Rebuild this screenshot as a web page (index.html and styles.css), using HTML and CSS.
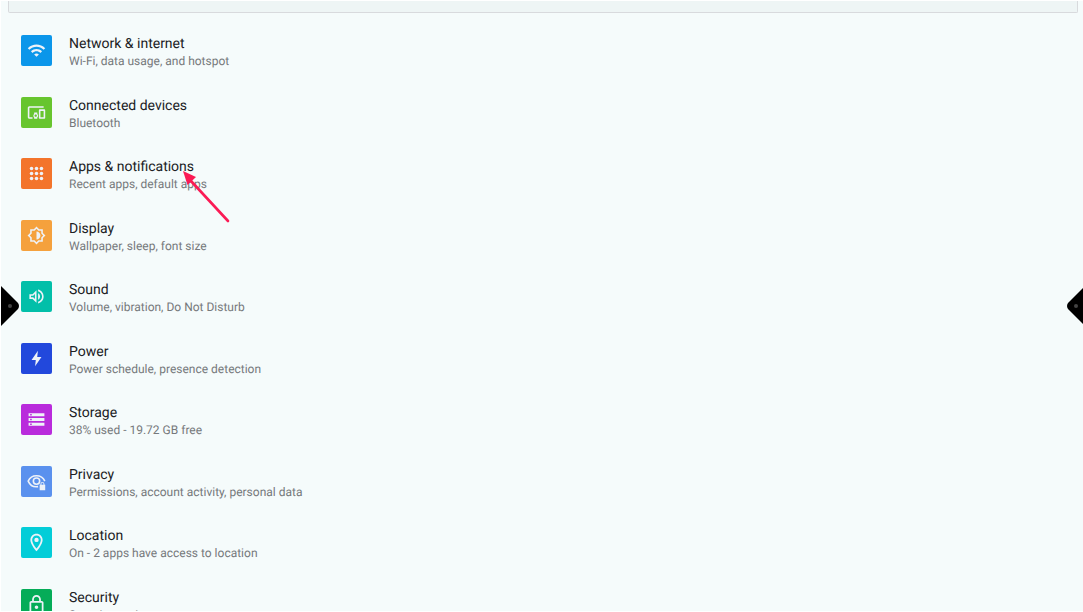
FILE: index.html
```html
<!DOCTYPE html>
<html lang="en">
  <head>
    <meta charset="UTF-8" />
    <meta name="viewport" content="width=device-width, initial-scale=1.0" />
    <title>Settings</title>
    <link rel="stylesheet" href="styles.css">
  </head>

  <body>
    <main class="screen">
      <div class="search-card"></div>

      <ul class="settings">
        <li class="item">
          <a href="#network">
            <span class="icon network">
              <svg viewBox="0 0 24 24"><path d="M1 9l2 2c4.970-4.970 13.030-4.970 18 0l2-2C16.930 2.930 7.080 2.930 1 9zm8 8l3 3 3-3c-1.650-1.660-4.340-1.660-6 0zm-4-4l2 2c2.760-2.760 7.240-2.760 10 0l2-2C15.140 9.140 8.870 9.140 5 13z" /></svg>
            </span>
            <span class="text">
              <span class="title">Network &amp; internet</span>
              <span class="summary">Wi-Fi, data usage, and hotspot</span>
            </span>
          </a>
        </li>
        <li class="item">
          <a href="#devices">
            <span class="icon devices">
              <svg viewBox="0 0 24 24"><path d="M3 6h18V4H3c-1.100 0-2 .9-2 2v12c0 1.100.9 2 2 2h4v-2H3V6zm10 6H9v1.780c-.61.550-1 1.330-1 2.220s.39 1.670 1 2.220V20h4v-1.780c.61-.55 1-1.340 1-2.220s-.39-1.670-1-2.220V12zm-2 5.500c-.83 0-1.500-.67-1.500-1.500s.67-1.500 1.500-1.500 1.500.67 1.500 1.500-.67 1.500-1.500 1.500zM22 8h-6c-.5 0-1 .5-1 1v10c0 .5.500 1 1 1h6c.5 0 1-.5 1-1V9c0-.5-.5-1-1-1zm-1 10h-4v-8h4v8z" /></svg>
            </span>
            <span class="text">
              <span class="title">Connected devices</span>
              <span class="summary">Bluetooth</span>
            </span>
          </a>
        </li>
        <li class="item">
          <a href="#apps">
            <span class="icon apps">
              <svg viewBox="0 0 24 24"><g><circle cx="5" cy="5" r="2.500" /><circle cx="12" cy="5" r="2.500" /><circle cx="19" cy="5" r="2.500" /><circle cx="5" cy="12" r="2.500" /><circle cx="12" cy="12" r="2.500" /><circle cx="19" cy="12" r="2.500" /><circle cx="5" cy="19" r="2.500" /><circle cx="12" cy="19" r="2.500" /><circle cx="19" cy="19" r="2.500" /></g></svg>
            </span>
            <span class="text">
              <span class="title">Apps &amp; notifications</span>
              <span class="summary">Recent apps, default apps</span>
            </span>
          </a>
          <svg class="arrow" viewBox="0 0 48 54">
            <path d="M45 50L8 10" stroke="#fb1b55" stroke-width="2.600" stroke-linecap="round" />
            <path d="M0 0L13 6L4.500 14Z" fill="#fb1b55" />
          </svg>
        </li>
        <li class="item">
          <a href="#display">
            <span class="icon display">
              <svg viewBox="0 0 24 24"><path d="M20 8.690V4h-4.690L12 .69 8.690 4H4v4.690L.69 12 4 15.310V20h4.690L12 23.310 15.310 20H20v-4.690L23.310 12 20 8.690zm-2 5.790V18h-3.520L12 20.480 9.520 18H6v-3.520L3.520 12 6 9.520V6h3.520L12 3.520 14.480 6H18v3.520L20.480 12 18 14.480zM12 7v10c2.760 0 5-2.240 5-5s-2.240-5-5-5z" /></svg>
            </span>
            <span class="text">
              <span class="title">Display</span>
              <span class="summary">Wallpaper, sleep, font size</span>
            </span>
          </a>
        </li>
        <li class="item">
          <a href="#sound">
            <span class="icon sound">
              <svg viewBox="0 0 24 24"><path d="M3 9v6h4l5 5V4L7 9H3zm7-.17v6.340L7.830 13H5v-2h2.830L10 8.830zM14 7.970v8.050c1.480-.73 2.500-2.250 2.500-4.020S15.480 8.710 14 7.970zm0-4.740v2.060c2.890.86 5 3.540 5 6.710s-2.110 5.850-5 6.710v2.060c4.010-.91 7-4.490 7-8.770s-2.990-7.860-7-8.770z" /></svg>
            </span>
            <span class="text">
              <span class="title">Sound</span>
              <span class="summary">Volume, vibration, Do Not Disturb</span>
            </span>
          </a>
        </li>
        <li class="item">
          <a href="#power">
            <span class="icon power">
              <svg viewBox="0 0 24 24"><path d="M14 1L5 14h6l-1 9 9-13h-6z" /></svg>
            </span>
            <span class="text">
              <span class="title">Power</span>
              <span class="summary">Power schedule, presence detection</span>
            </span>
          </a>
        </li>
        <li class="item">
          <a href="#storage">
            <span class="icon storage">
              <svg viewBox="0 0 24 24"><path d="M2 20h20v-4H2v4zm2-3h2v2H4v-2zM2 4v4h20V4H2zm4 3H4V5h2v2zm-4 7h20v-4H2v4zm2-3h2v2H4v-2z" /></svg>
            </span>
            <span class="text">
              <span class="title">Storage</span>
              <span class="summary">38% used - 19.72 GB free</span>
            </span>
          </a>
        </li>
        <li class="item">
          <a href="#privacy">
            <span class="icon privacy">
              <svg viewBox="0 0 24 24">
                <g fill="none" stroke="#eef2f8" stroke-width="2">
                  <path d="M14 18.500C8 19.500 3.500 16 1.500 11.500C5.500 2.500 18.500 2.500 22.500 11.500" />
                  <circle cx="12" cy="11.500" r="4" />
                </g>
                <path d="M16 16h1v-1a2.500 2.500 0 0 1 5 0v1h1v7h-7zM18.200 16h2.600v-1a1.300 1.300 0 0 0-2.600 0z" />
              </svg>
            </span>
            <span class="text">
              <span class="title">Privacy</span>
              <span class="summary">Permissions, account activity, personal data</span>
            </span>
          </a>
        </li>
        <li class="item">
          <a href="#location">
            <span class="icon location">
              <svg viewBox="0 0 24 24"><path d="M12 2C8.130 2 5 5.130 5 9c0 5.250 7 13 7 13s7-7.750 7-13c0-3.870-3.130-7-7-7zM7 9c0-2.760 2.240-5 5-5s5 2.240 5 5c0 2.880-2.880 7.190-5 9.880C9.920 16.210 7 11.850 7 9z" /><circle cx="12" cy="9" r="2.500" /></svg>
            </span>
            <span class="text">
              <span class="title">Location</span>
              <span class="summary">On - 2 apps have access to location</span>
            </span>
          </a>
        </li>
        <li class="item">
          <a href="#security">
            <span class="icon security">
              <svg viewBox="0 0 24 24"><path d="M18 8h-1V6c0-2.760-2.240-5-5-5S7 3.240 7 6v2H6c-1.100 0-2 .9-2 2v10c0 1.100.9 2 2 2h12c1.100 0 2-.9 2-2V10c0-1.100-.9-2-2-2zM9 6c0-1.660 1.340-3 3-3s3 1.340 3 3v2H9V6zm9 14H6V10h12v10zm-6-3c1.100 0 2-.9 2-2s-.9-2-2-2-2 .9-2 2 .9 2 2 2z" /></svg>
            </span>
            <span class="text">
              <span class="title">Security</span>
              <span class="summary">Security settings</span>
            </span>
          </a>
        </li>
      </ul>
    </main>

    <!-- side menu handles -->
    <button class="handle handle-left" aria-label="Open left menu">
      <svg viewBox="0 0 18 40"><path d="M0 0L17 17Q19 20 17 23L0 40Z" /><circle cx="9" cy="20" r="2" fill="#444" /></svg>
    </button>
    <button class="handle handle-right" aria-label="Open right menu">
      <svg viewBox="0 0 16 40"><path d="M16 2L1 17Q-1 20 1 23L16 38Z" /><circle cx="9" cy="20" r="2" fill="#444" /></svg>
    </button>
  </body>
</html>
```

FILE: styles.css
```css
body {
  margin: 0;
  background-color: #fff;
  font-family: Roboto, Arial, sans-serif;
  text-rendering: geometricPrecision;
}

.screen {
  box-sizing: border-box;
  height: calc(100vh - 2px);
  margin: 1px 0 1px 1px;
  padding: 0 5px 0 7px;
  background-color: #f5fbfb;
  overflow: hidden;
}

.search-card {
  height: 11px;
  background-color: #eef5f5;
  border: 1px solid #d8dadd;
  border-top: none;
  border-radius: 0 0 2px 2px;
}

.settings {
  margin: 0;
  padding: 22px 13px 0;
  list-style: none;
}

.item {
  position: relative;
  height: 31px;
  margin-bottom: 30px;
}

.item:nth-child(odd) {
  margin-bottom: 31px;
}

.item a {
  display: flex;
  align-items: center;
  gap: 17px;
  height: 100%;
  color: #202124;
  text-decoration: none;
}

.icon {
  display: flex;
  align-items: center;
  justify-content: center;
  width: 31px;
  height: 31px;
  border-radius: 2px;
}

.icon svg {
  width: 19px;
  height: 19px;
  fill: #eef2f8;
}

.icon.apps svg,
.icon.power svg {
  width: 17px;
  height: 17px;
}

.icon.location svg,
.icon.security svg {
  width: 21px;
  height: 21px;
}

.network { background-color: #0b96ea; }
.devices { background-color: #67c52e; }
.apps { background-color: #f3742b; }
.display { background-color: #f5a13d; }
.sound { background-color: #02bfa9; }
.power { background-color: #2248dc; }
.storage { background-color: #b92bdc; }
.privacy { background-color: #5a91ee; }
.location { background-color: #03cdd8; }
.security { background-color: #05ac58; }

.text {
  display: flex;
  flex-direction: column;
  padding-top: 3px;
  white-space: nowrap;
}

.title {
  font-size: 14px;
  line-height: 18px;
}

.summary {
  color: #76797c;
  font-size: 12px;
  line-height: 16px;
}

/* pointer drawn over the apps row */
.arrow {
  position: absolute;
  left: 162px;
  top: 13px;
  width: 48px;
  height: 54px;
  fill: none;
}

.handle {
  position: fixed;
  top: 50%;
  height: 40px;
  margin-top: -20px;
  padding: 0;
  border: none;
  background: none;
}

.handle svg {
  display: block;
  width: 100%;
  height: 100%;
}

.handle-left {
  left: 1px;
  width: 18px;
}

.handle-right {
  right: 0;
  width: 16px;
}
```
